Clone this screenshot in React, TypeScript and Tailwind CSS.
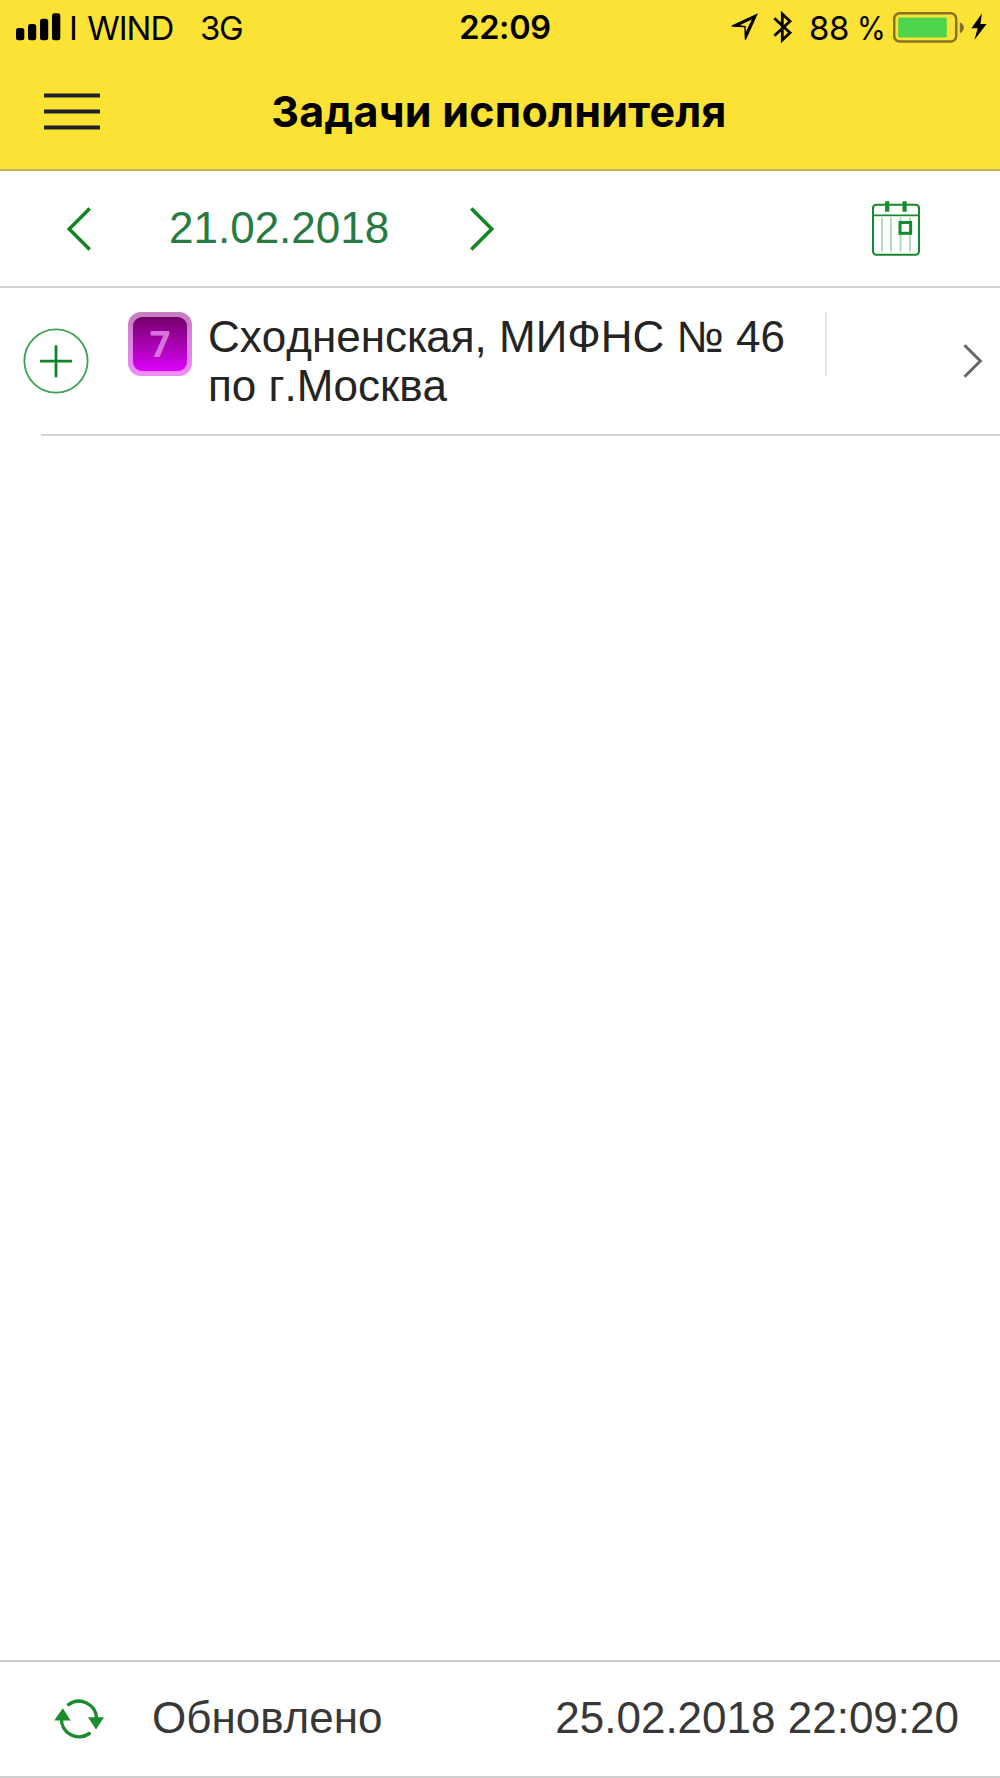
import type { ReactNode } from 'react'

const INTER = "font-['Inter','Liberation_Sans',sans-serif]"

interface Task {
  id: number
  priority: number
  title: string
}

const tasks: Task[] = [{ id: 1, priority: 7, title: 'Сходненская, МИФНС № 46 по г.Москва' }]

function SignalIcon() {
  return (
    <svg width="46" height="28" viewBox="0 0 46 28" fill="#000" className="shrink-0">
      <rect x="0" y="15" width="8.3" height="12.3" rx="2.5" />
      <rect x="12" y="11" width="8.2" height="16.3" rx="2.5" />
      <rect x="24" y="5.7" width="8.2" height="21.6" rx="2.5" />
      <rect x="36" y="0.2" width="8.3" height="27.1" rx="2.5" />
    </svg>
  )
}

function LocationIcon() {
  return (
    <svg width="28" height="30" viewBox="0 0 28 30" className="shrink-0">
      <path
        fillRule="evenodd"
        d="M27 1.2 0.6 13.4v1.3l12.7.5.5 12.6h1.2ZM20.8 7.4 14.9 19.8l-.2-5.9-5.9-.6Z"
        fill="#000"
      />
    </svg>
  )
}

function BluetoothIcon() {
  return (
    <svg width="20" height="34" viewBox="0 0 20 34" fill="none" stroke="#000" strokeWidth="2.8" className="shrink-0">
      <path d="M1.3 8.3 17 22.8l-7.7 7.3V3.9L17 11.2 1.3 25.7" />
    </svg>
  )
}

function BatteryIcon() {
  return (
    <svg width="72" height="32" viewBox="0 0 72 32" className="shrink-0">
      <rect x="1.2" y="2.2" width="62" height="28.4" rx="5.5" fill="none" stroke="#827326" strokeWidth="2.5" />
      <path d="M66.8 11.2c5.4 1.8 5.4 9.2 0 11Z" fill="#827326" />
      <rect x="5.2" y="6.6" width="48.6" height="20" rx="1.2" fill="#4fd54b" />
    </svg>
  )
}

function BoltIcon() {
  return (
    <svg width="16" height="28" viewBox="0 0 16 28" className="shrink-0">
      <path d="M10.9.4.4 15.2h6.4L3.3 27 15.6 10.9H9.4Z" fill="#000" />
    </svg>
  )
}

function MenuIcon() {
  return (
    <svg width="56" height="38" viewBox="0 0 56 38" stroke="#20222b" strokeWidth="4">
      <path d="M0 3.4h56M0 19.4h56M0 35.4h56" />
    </svg>
  )
}

function CalendarIcon() {
  return (
    <svg width="48" height="56" viewBox="0 0 48 56" fill="none" stroke="#148a2c">
      <path d="M10 17.5v34M19 17.5v34M28.5 17.5v34M38 17.5v34" stroke="#a3d8b1" strokeWidth="1.7" />
      <rect x="1" y="4.7" width="46" height="50" rx="3.3" strokeWidth="2.1" />
      <path d="M1 15.3h46" strokeWidth="1.7" />
      <path d="M15.2 1.2v10.6M32.6 1.2v10.6" strokeWidth="4.2" />
      <rect x="28" y="22.5" width="10.6" height="10.8" fill="#fff" strokeWidth="3" />
    </svg>
  )
}

function RefreshIcon() {
  return (
    <svg width="50" height="40" viewBox="0 0 50 40" fill="none" stroke="#1b8c2d" strokeWidth="3.4" strokeLinecap="round">
      <path d="M14.5 5.6A17.6 17.6 0 0 1 42.5 19" />
      <path d="M35.3 34.5A17.6 17.6 0 0 1 7.4 20" />
      <path d="M34 18.2h16L42 30.5ZM.2 21.4h16.4L8.8 9.2Z" fill="#1b8c2d" stroke="none" />
    </svg>
  )
}

function StatusBar() {
  return (
    <div className={`flex h-[54px] items-start text-[33px] leading-[40px] text-black ${INTER}`}>
      <div className="flex w-[400px] items-start pl-[16px]">
        <div className="pt-[13px]">
          <SignalIcon />
        </div>
        <span className="ml-[7px] mt-[8px] w-[131px] whitespace-nowrap tracking-[-1px] [word-spacing:2px]">I WIND</span>
        <span className="mt-[8px] whitespace-nowrap tracking-[-1.3px]">3G</span>
      </div>
      <span className="mt-[8px] w-[210px] text-center text-[32.5px] font-semibold tracking-[-0.3px]">22:09</span>
      <div className="flex flex-1 items-start pl-[121px]">
        <div className="pt-[12px]">
          <LocationIcon />
        </div>
        <div className="ml-[14px] pt-[10px]">
          <BluetoothIcon />
        </div>
        <span className="ml-[16px] mt-[8px] w-[84px] whitespace-nowrap tracking-[-0.3px] [word-spacing:-1px]">
          88 <span className="inline-block origin-left scale-x-[0.89]">%</span>
        </span>
        <div className="pt-[11px]">
          <BatteryIcon />
        </div>
        <div className="ml-[6px] pt-[13px]">
          <BoltIcon />
        </div>
      </div>
    </div>
  )
}

function Header() {
  return (
    <header className="h-[171px] border-b-2 border-[#c1b24f] bg-[#fce235]">
      <StatusBar />
      <div className="flex h-[113px] items-center px-[44px]">
        <button type="button" aria-label="Меню" className="w-[56px]">
          <MenuIcon />
        </button>
        <h1
          className={`flex-1 whitespace-nowrap pr-[58px] text-center text-[43px] font-bold leading-[52px] tracking-[0.25px] ${INTER}`}
        >
          Задачи исполнителя
        </h1>
      </div>
    </header>
  )
}

function ArrowButton({ label, children }: { label: string; children: ReactNode }) {
  return (
    <button type="button" aria-label={label} className="shrink-0">
      <svg width="26" height="44" viewBox="0 0 26 44" fill="none" stroke="#118424" strokeWidth="3.6">
        {children}
      </svg>
    </button>
  )
}

function DateBar() {
  return (
    <div className="flex h-[117px] items-center border-b-2 border-[#d2d2d2] pl-[67px] pr-[80px]">
      <ArrowButton label="Назад">
        <path d="M22.7 1.5 2.2 22l20.5 20.5" />
      </ArrowButton>
      <span className="-mt-[2px] ml-[76px] w-[299px] text-[44px] leading-[50px] text-[#277b42]">21.02.2018</span>
      <ArrowButton label="Вперёд">
        <path d="M3.3 1.5 23.8 22 3.3 42.5" />
      </ArrowButton>
      <button type="button" aria-label="Календарь" className="-mt-[2px] ml-auto">
        <CalendarIcon />
      </button>
    </div>
  )
}

function TaskRow({ task }: { task: Task }) {
  return (
    <li className="h-[148px]">
      <div className="flex h-[146px] items-start">
        <button type="button" aria-label="Добавить" className="ml-[23px] mt-[40px] shrink-0">
          <svg width="66" height="66" viewBox="0 0 66 66" fill="none" stroke="#138526">
            <circle cx="33" cy="33" r="31.6" stroke="#3fa456" strokeWidth="1.9" />
            <path d="M17 33.2h32M33 17.2v32" strokeWidth="2.8" />
          </svg>
        </button>
        <span className="ml-[39px] mt-[24px] flex size-[64px] shrink-0 items-center justify-center rounded-[13px] bg-linear-to-b from-[#c77dc0] to-[#ed8dfd]">
          <span className="flex size-[54px] items-center justify-center rounded-[9px] bg-linear-to-b from-[#75006a] to-[#dc00fa] font-['Open_Sans','Liberation_Sans',sans-serif] text-[36px] font-bold leading-none text-[#d873de]">
            {task.priority}
          </span>
        </span>
        <p className="ml-[16px] mt-[24px] w-[600px] text-[44px] leading-[49.3px] text-[#242424] [font-kerning:none]">
          {task.title}
        </p>
        <span className="ml-[17px] mt-[24px] h-[64px] w-[2px] bg-[#e8e8e8]" />
        <svg width="20" height="34" viewBox="0 0 20 34" fill="none" stroke="#666" strokeWidth="3" className="ml-[136px] mt-[56px]">
          <path d="M1.5 1.2 17.3 17 1.5 32.8" />
        </svg>
      </div>
      <div className="ml-[41px] h-[2px] bg-[#d4d4d4]" />
    </li>
  )
}

function Footer() {
  return (
    <footer className="flex h-[118px] items-center border-y-2 border-[#cfcfcf] pl-[54px] pr-[41px] text-[44px] leading-[50px] text-[#383838]">
      <RefreshIcon />
      <span className="-mt-[2px] ml-[48px] [font-kerning:none]">Обновлено</span>
      <span className="-mt-[2px] ml-auto">25.02.2018 22:09:20</span>
    </footer>
  )
}

export default function App() {
  return (
    <div className="flex h-[1778px] w-[1000px] flex-col overflow-hidden bg-white font-['Liberation_Sans',Arial,sans-serif]">
      <Header />
      <DateBar />
      <ul className="flex-1">
        {tasks.map((task) => (
          <TaskRow key={task.id} task={task} />
        ))}
      </ul>
      <Footer />
    </div>
  )
}
